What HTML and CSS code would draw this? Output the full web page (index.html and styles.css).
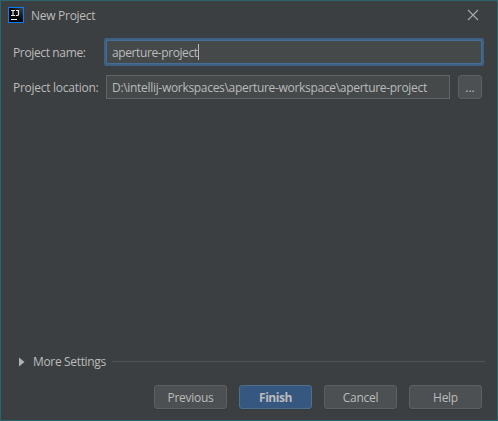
FILE: index.html
```html
<!DOCTYPE html>
<html lang="en">
<head>
<meta charset="utf-8">
<title>New Project</title>
<link rel="stylesheet" href="styles.css">
</head>
<body>
<main class="dialog">
  <header class="titlebar">
    <svg class="logo" width="16" height="16" viewBox="0 0 16 16">
      <defs><linearGradient id="tile" x1="0" y1="1" x2="1" y2="0"><stop offset="0.45" stop-color="#000"/><stop offset="1" stop-color="#444"/></linearGradient></defs>
      <rect width="16" height="16" fill="#087cfa"/>
      <rect x="1" y="1" width="14" height="14" fill="url(#tile)"/>
      <path d="M3 3.500h4M5 3.500v5M3 8.500h4M8 3.500h3M10.500 3v4.500q0 1-1 1H7.800" fill="none" stroke="#e8e8e8" stroke-width="1.200"/>
      <rect x="3" y="12" width="6" height="1" fill="#fff"/>
    </svg>
    <h1 class="title"><span>New Project</span></h1>
    <svg class="close" width="12" height="12" viewBox="0 0 12 12"><path d="M1 1l10 10M11 1L1 11" stroke="#a9abac" stroke-width="1.100"/></svg>
  </header>
  <section class="form">
    <div class="row">
      <label class="label name-label"><span>Project name:</span></label>
      <div class="field focused"><span class="name-text">aperture-project</span><i class="caret"></i></div>
    </div>
    <div class="row">
      <label class="label location-label"><span>Project location:</span></label>
      <div class="field"><span class="path-text">D:\intellij-workspaces\aperture-workspace\aperture-project</span></div>
      <button class="button browse">...</button>
    </div>
  </section>
  <section class="more">
    <svg class="arrow" width="6" height="10" viewBox="0 0 6 10"><path d="M0 0.500L5.500 5L0 9.500z" fill="#afb1b3"/></svg>
    <span class="more-text">More Settings</span>
    <div class="rule"></div>
  </section>
  <footer class="actions">
    <button class="button previous"><span>Previous</span></button>
    <button class="button primary"><span>Finish</span></button>
    <button class="button cancel"><span>Cancel</span></button>
    <button class="button help"><span>Help</span></button>
  </footer>
</main>
</body>
</html>
```
FILE: styles.css
```css
* { box-sizing: border-box; }
body {
  margin: 0;
  background: #3c3f41;
  color: #bbbbbb;
  font: 12px/16px "Open Sans", "Noto Sans", sans-serif;
}
.dialog {
  width: 498px;
  height: 421px;
  border: 1px solid #29666b;
  display: flex;
  flex-direction: column;
  overflow: hidden;
  white-space: nowrap;
}
.titlebar {
  height: 30px;
  display: flex;
  align-items: center;
  padding: 0 18px 0 7px;
}
.logo { margin-top: -2px; }
.title {
  flex: 1;
  margin: 0 0 0 7px;
  font-size: 12px;
  font-weight: 400;
  letter-spacing: -0.28px;
}
.close { margin-top: -2px; }
.form {
  padding: 9px 15px 0 12px;
  display: flex;
  flex-direction: column;
  gap: 11px;
}
.row { display: flex; height: 24px; align-items: center; }
.label { width: 93px; flex: none; padding-top: 2px; letter-spacing: -0.36px; }
.location-label { letter-spacing: -0.27px; }
.field {
  width: 344px;
  height: 24px;
  display: flex;
  align-items: center;
  padding: 2px 0 0 5px;
  border: 1px solid #646464;
  background: #45494a;
}
.focused {
  width: 376px;
  border-color: #466d94;
  box-shadow: 0 0 0 2px #3d6185;
  border-radius: 1px;
}
.name-text { letter-spacing: -0.4px; }
.path-text { letter-spacing: -0.31px; }
.caret { width: 1px; height: 16px; margin-top: -2px; background: #bbbbbb; }
.button {
  width: 73px;
  height: 24px;
  padding: 2px 0 0;
  border: 1px solid #5e6060;
  border-radius: 3px;
  background: #4c5052;
  color: #bbbbbb;
  font: inherit;
  line-height: 20px;
  box-shadow: 0 1px 0 #373a3c;
}
.browse { width: 24px; margin-left: 8px; }
.more {
  display: flex;
  align-items: center;
  margin-top: auto;
  height: 20px;
  padding: 0 12px 0 18px;
}
.arrow { margin-top: -1px; }
.more-text { margin: 0 6px 0 8px; letter-spacing: -0.34px; }
.rule { flex: 1; height: 1px; margin-top: -1px; background: #515355; }
.actions {
  display: flex;
  justify-content: flex-end;
  gap: 12px;
  padding: 13px 15px 11px 0;
}
.previous, .cancel, .help { letter-spacing: -0.3px; }
.primary {
  border-color: #4c708c;
  background: #365880;
  font-weight: 700;
  letter-spacing: -0.45px;
}
```
